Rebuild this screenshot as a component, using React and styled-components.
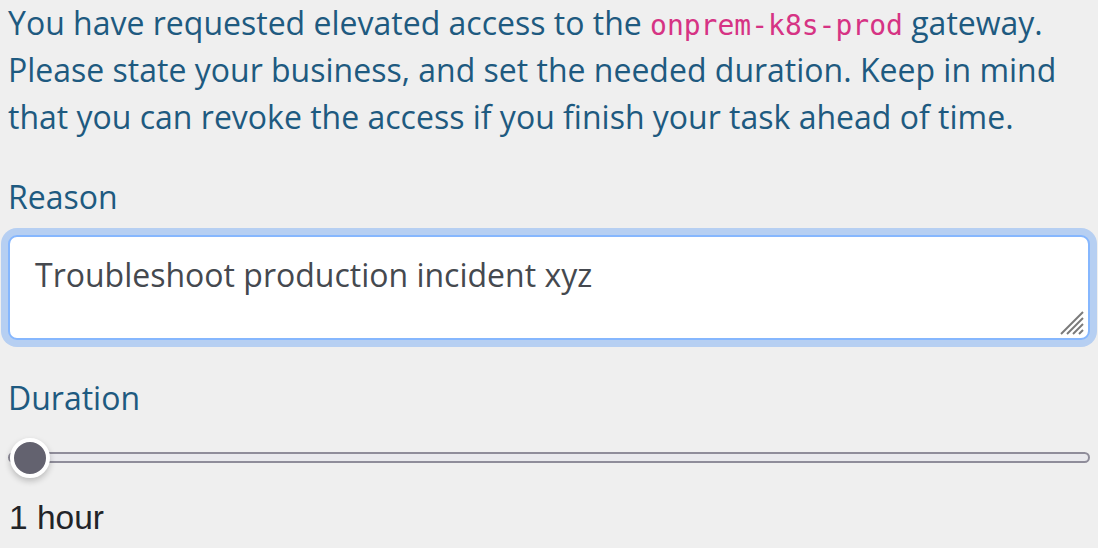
import React, { useState } from "react";
import styled, { createGlobalStyle } from "styled-components";

const Global = createGlobalStyle`
  html, body { margin: 0; padding: 0; background: #efefef; }
  body { font-family: "Open Sans", "Noto Sans", sans-serif; }
  * { box-sizing: border-box; }
`;

const Page = styled.main`
  padding: 0 8px;
  width: 1098px;
  height: 548px;
  overflow: hidden;
`;

const Intro = styled.p`
  margin: -1.5px 0 0;
  font-size: 32px;
  line-height: 47px;
  color: #1e5a80;
`;

const Code = styled.code`
  font-family: "DejaVu Sans Mono", "Liberation Mono", monospace;
  font-size: 28px;
  line-height: 1;
  color: #d63384;
`;

const Field = styled.div`
  display: flex;
  flex-direction: column;
  gap: ${(p) => p.$gap}px;
  margin-top: 33.5px;
`;

const Label = styled.label`
  font-size: 32px;
  line-height: 47px;
  color: #1e5a80;
`;

const AreaWrap = styled.div`
  position: relative;
  width: 100%;
`;

const TextArea = styled.textarea`
  display: block;
  width: 100%;
  height: 105px;
  resize: none;
  border: 2px solid #86b7fe;
  border-radius: 9px;
  background: #fff;
  box-shadow: 0 0 0 7px rgba(13, 110, 253, 0.25);
  outline: none;
  padding: 18px 25px 14px;
  font-family: "Open Sans", "Noto Sans", sans-serif;
  font-size: 32px;
  line-height: 40px;
  color: #45494f;
`;

const Grip = styled.svg`
  position: absolute;
  right: 6px;
  bottom: 5px;
  width: 24px;
  height: 24px;
  pointer-events: none;
`;

const Range = styled.input`
  -webkit-appearance: none;
  appearance: none;
  display: block;
  width: 100%;
  height: 40px;
  margin: 0;
  background: transparent;

  &::-webkit-slider-runnable-track {
    height: 11px;
    border: 2px solid #8f8d9a;
    border-radius: 6px;
    background: #e9e9ed;
  }
  &::-webkit-slider-thumb {
    -webkit-appearance: none;
    width: 40px;
    height: 40px;
    margin-top: -16.5px;
    border-radius: 50%;
    background: #63626f;
    border: 4px solid #fff;
    box-shadow: 0 3px 6px rgba(0, 0, 0, 0.22);
  }
`;

const Value = styled.output`
  display: block;
  margin-top: 21px;
  padding-left: 1px;
  font-family: "Liberation Sans", Arial, sans-serif;
  font-size: 33.5px;
  color: #222428;
`;

export default function App() {
  const [hours, setHours] = useState(1);
  return (
    <Page>
      <Global />
      <Intro>
        You have requested elevated access to the <Code>onprem-k8s-prod</Code> gateway.
        Please state your business, and set the needed duration. Keep in mind that you can
        revoke the access if you finish your task ahead of time.
      </Intro>
      <Field $gap={15}>
        <Label htmlFor="reason">Reason</Label>
        <AreaWrap>
          <TextArea id="reason" defaultValue="Troubleshoot production incident xyz" />
          <Grip viewBox="0 0 24 24">
            <g stroke="#7a7a7a" strokeWidth="2" strokeLinecap="butt">
              <line x1="1" y1="23" x2="23" y2="1" />
              <line x1="7" y1="23" x2="23" y2="7" />
              <line x1="13" y1="23" x2="23" y2="13" />
              <line x1="19" y1="23" x2="23" y2="19" />
            </g>
          </Grip>
        </AreaWrap>
      </Field>
      <Field $gap={17}>
        <Label htmlFor="duration">Duration</Label>
        <Range
          id="duration"
          type="range"
          min="1"
          max="24"
          value={hours}
          onChange={(e) => setHours(Number(e.target.value))}
        />
      </Field>
      <Value htmlFor="duration">
        {hours} {hours === 1 ? "hour" : "hours"}
      </Value>
    </Page>
  );
}
